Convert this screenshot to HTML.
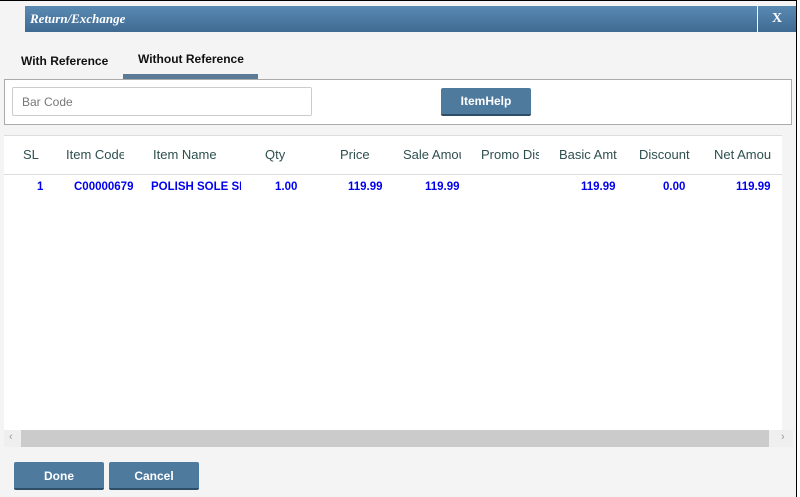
<!DOCTYPE html>
<html><head><style>
body{margin:0;width:800px;height:496px;background:#fff;position:relative;overflow:hidden;font-family:"Liberation Sans",sans-serif}
.dlg{position:absolute;left:0;top:0;width:796px;height:496px;background:#f4f4f4;border-right:1px solid #000;border-top:1px solid #000}
.title{position:absolute;left:25px;top:5px;width:732px;height:26px;background:linear-gradient(#5a8ab3,#3f6a92);color:#fff;font-family:"Liberation Serif",serif;font-style:italic;font-weight:bold;font-size:13px;line-height:26px;padding-left:5px;box-sizing:border-box}
.x{position:absolute;left:758px;top:5px;width:38px;height:26px;background:linear-gradient(#5a8ab3,#3f6a92);color:#fff;font-weight:bold;font-size:14px;text-align:center;line-height:26px;font-family:"Liberation Serif",serif}
.tab{position:absolute;font-weight:bold;font-size:12px;color:#111}
.ul{position:absolute;left:123px;top:73px;width:135px;height:5px;background:#5b7a96}
.panel{position:absolute;left:4px;top:78px;width:786px;height:44px;background:#fff;border:1px solid #aaa}
.inp{position:absolute;left:12px;top:86px;width:300px;height:29px;border:1px solid #ccc;border-radius:2px;background:#fff;font-size:12px;color:#777;line-height:29px;padding-left:9px;box-sizing:border-box}
.btn{position:absolute;background:#4e7a9e;color:#fff;font-weight:bold;font-size:12px;text-align:center;border-radius:2px;border-bottom:2px solid #2d4d68;box-sizing:border-box}
.grid{position:absolute;left:4px;top:134px;width:778px;height:296px;background:#fff;border-top:1px solid #ddd}
.hl{position:absolute;left:0;top:38px;width:778px;height:1px;background:#ddd}
.h{position:absolute;top:11px;font-size:13px;color:#2f4f4f;white-space:nowrap;overflow:hidden}
.d{position:absolute;top:45px;font-size:11.5px;color:#00e;font-weight:bold;white-space:nowrap;overflow:hidden}
.sb{position:absolute;left:4px;top:429px;width:789px;height:17px;background:#efefef}
.thumb{position:absolute;left:17px;top:0;width:748px;height:17px;background:#cbcbcb}
</style></head><body>
<div class="dlg">
<div class="title">Return/Exchange</div>
<div class="x">X</div>
<div class="tab" style="left:21px;top:53px">With Reference</div>
<div class="tab" style="left:138px;top:51px">Without Reference</div>
<div class="ul"></div>
<div class="panel"></div>
<div class="inp">Bar Code</div>
<div class="btn" style="left:441px;top:87px;width:90px;height:28px;line-height:27px">ItemHelp</div>
<div class="grid">
<div class="h" style="left:19px">SL</div>
<div class="h" style="left:62px;width:58px">Item Code</div>
<div class="h" style="left:149px">Item Name</div>
<div class="h" style="left:261px">Qty</div>
<div class="h" style="left:336px">Price</div>
<div class="h" style="left:399px;width:58px">Sale Amount</div>
<div class="h" style="left:477px;width:58px">Promo Discount</div>
<div class="h" style="left:555px">Basic Amt</div>
<div class="h" style="left:635px">Discount</div>
<div class="h" style="left:710px;width:58px">Net Amount</div>
<div class="hl"></div>
<div class="d" style="left:33px">1</div>
<div class="d" style="left:70px">C00000679</div>
<div class="d" style="left:147px;width:90px">POLISH SOLE SHINE</div>
<div class="d" style="left:271px">1.00</div>
<div class="d" style="left:344px">119.99</div>
<div class="d" style="left:421px">119.99</div>
<div class="d" style="left:577px">119.99</div>
<div class="d" style="left:659px">0.00</div>
<div class="d" style="left:732px">119.99</div>
</div>
<div class="sb"><div class="thumb"></div><span style="position:absolute;left:5px;top:1px;font-size:11px;color:#999">‹</span><span style="position:absolute;left:777px;top:1px;font-size:11px;color:#999">›</span></div>
<div class="btn" style="left:14px;top:461px;width:90px;height:28px;line-height:28px">Done</div>
<div class="btn" style="left:109px;top:461px;width:90px;height:28px;line-height:28px">Cancel</div>
</div>
</body></html>
